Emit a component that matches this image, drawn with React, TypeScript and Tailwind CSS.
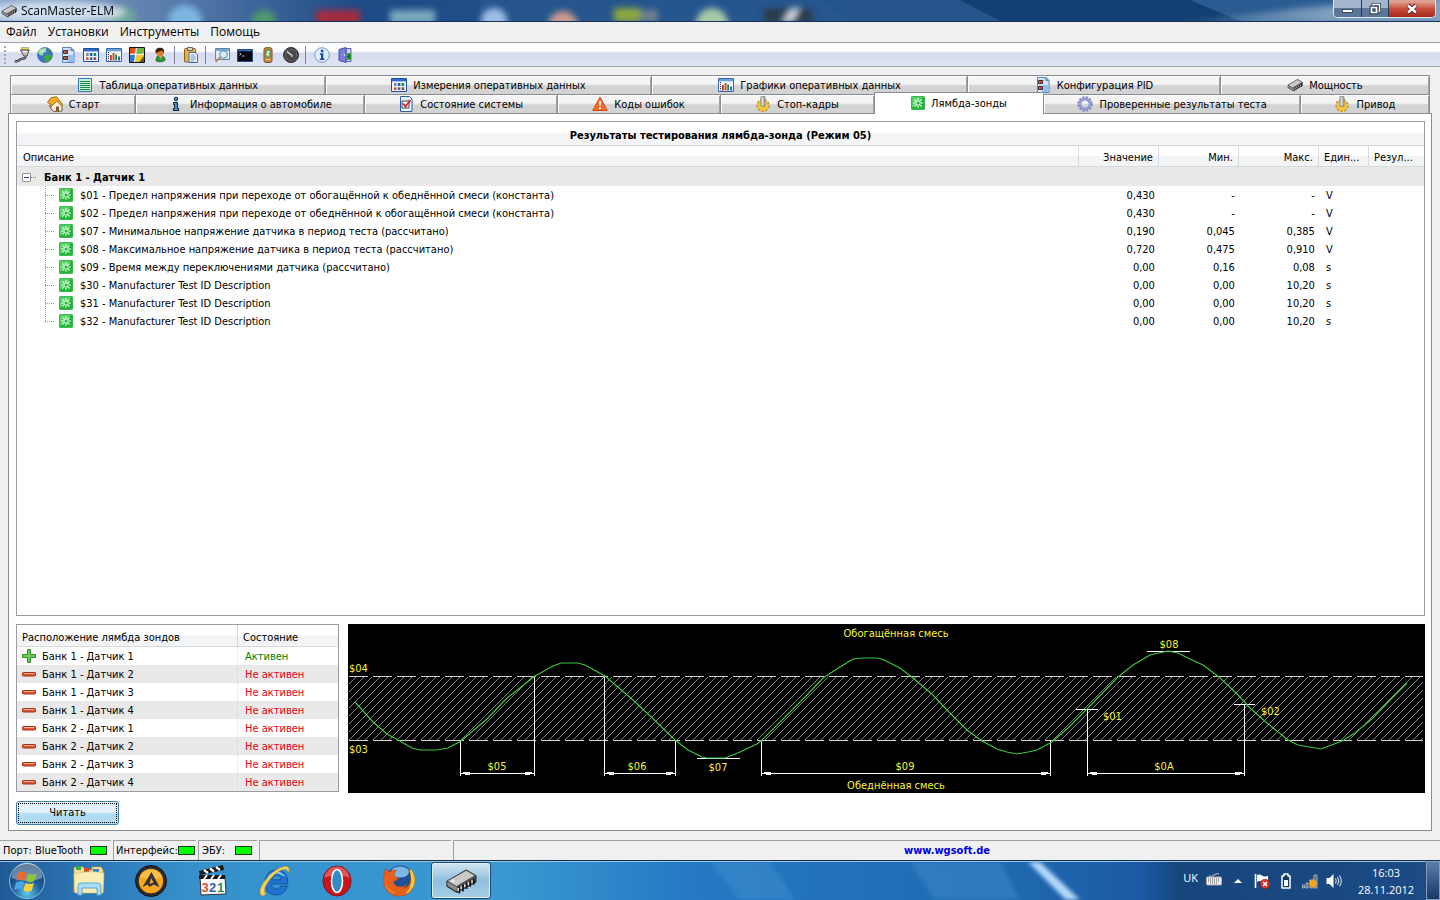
import React, { useState } from "react";

type IconProps = { size?: number };

function Svg({ size = 16, box = 16, children }: { size?: number; box?: number; children: React.ReactNode }) {
  return (
    <svg width={size} height={size} viewBox={`0 0 ${box} ${box}`} aria-hidden="true" className="shrink-0">
      {children}
    </svg>
  );
}

const ChipIcon = ({ size }: IconProps) => (
  <Svg size={size}>
    <path d="M1 8.2 10.6 2.6 15.4 5.4 15.4 8.4 6 13.6 1 10.6Z" fill="#555" stroke="#222" strokeWidth=".6" />
    <path d="M1 8 10.6 2.6 15.2 5.3 5.8 10.8Z" fill="#c9c9c9" stroke="#444" strokeWidth=".5" />
    <path d="M1.2 8.4 5.8 11v2.2L1.2 10.4Z" fill="#8b8b8b" />
    <path d="M7.2 10.8v3.4M9 9.8v3.4M10.8 8.8v3.2M12.6 7.7v3.2M14.4 6.7v3.2" stroke="#111" strokeWidth=".8" />
    <path d="M6.6 11.5v1.5M8.1 10.6v1.5M9.9 9.6v1.5M11.7 8.6v1.5M13.5 7.6v1.5" stroke="#eee" strokeWidth=".7" />
    <circle cx="3.9" cy="8.1" r=".7" fill="#eee" />
  </Svg>
);

const PlugIcon = () => (
  <Svg>
    <path d="M7.500 .5h7v2.500h-7z" fill="#efd95a" stroke="#777" strokeWidth=".5" />
    <path d="M6.500 3h8.700L13 9h-3.200Z" fill="#c4c4c4" stroke="#444" strokeWidth=".9" />
    <path d="M9 4.500h4" stroke="#fff" />
    <path d="M11.400 9C12 12.500 7.500 10.800 6 12.600 4.600 14.500 2.600 14.400 .8 14" fill="none" stroke="#222" strokeWidth="2.400" />
    <path d="M11.400 9C12 12.500 7.500 10.800 6 12.600 4.600 14.500 2.600 14.400 .8 14" fill="none" stroke="#ddd" strokeWidth=".7" />
  </Svg>
);

const GlobeIcon = () => (
  <Svg>
    <circle cx="8" cy="8" r="7.500" fill="#3f6fd0" stroke="#2b54a8" strokeWidth=".6" />
    <path d="M1.200 5C3 1.500 6.500 .4 9.500 1.200L8.600 4.400 6 5 6.600 8 4 8.600 2.200 7.600Z" fill="#8be08a" />
    <path d="M6.500 9.500 10 7.500 14 8 15 9.500C14 13 11.500 15 8.800 15.200L7 12.500Z" fill="#3aa83a" />
    <path d="M11 2.200 13.600 4.200 14.600 6.200 11.400 5.500Z" fill="#2f9440" />
    <ellipse cx="6" cy="4" rx="3.500" ry="2" fill="#fff" opacity=".35" />
  </Svg>
);

const PageIcon = () => (
  <Svg>
    <path d="M2.500 .5h8.500l3 3v12H2.500z" fill="#cfe4fa" stroke="#5f83b8" />
    <path d="M11 .5v3h3" fill="#6aa0e0" stroke="#5f83b8" />
    <path d="M9 8h4.500v7H7z" fill="#8fc0ef" />
    <path d="M3.500 3.500h4v3h-4zM3.500 9.500h4v3h-4z" fill="#c9735f" stroke="#333" />
    <path d="m5 4.500 1.200 1L8.500 2.800M5 10.500l1.200 1L8.500 8.800" fill="none" stroke="#a8281a" />
  </Svg>
);

const GridIcon = () => (
  <Svg>
    <path d="M.5 1.500h15v13H.5z" fill="#eef5fd" stroke="#1f4f9c" />
    <path d="M1 2h14v2.400H1z" fill="#2d6bc8" />
    <path d="M3 6h2.600v3H3z" fill="#8a8a8a" />
    <path d="M6.800 6h2.600v3H6.800z" fill="#235bd0" />
    <path d="M10.600 6h2.600v3h-2.600z" fill="#1c8f3d" />
    <path d="M3 10.300h2.600v2.700H3z" fill="#d4522e" />
    <path d="M6.800 10.300h2.600v2.700H6.800z" fill="#2a69be" />
    <path d="M10.600 10.300h2.600v2.700h-2.600z" fill="#8b4a30" />
  </Svg>
);

const BarsIcon = () => (
  <Svg>
    <path d="M.5 1.500h15v13H.5z" fill="#eef5fd" stroke="#3b68ab" />
    <path d="M1 2h14v2.200H1z" fill="#6a9fdf" />
    <path d="M2.500 5v8.500" stroke="#334" strokeDasharray="1 1" />
    <path d="M4 8h1.800v5.500H4z" fill="#c33" />
    <path d="M6.600 6h1.800v7.500H6.600z" fill="#bd4a20" />
    <path d="M9.200 7.500h1.800v6H9.200z" fill="#248a36" />
    <path d="M12 9.500h2v4h-2z" fill="#2f68c6" />
  </Svg>
);

const WindowsTile = () => (
  <Svg>
    <path d="M.5 .5h15v15H.5z" fill="#c7c7b2" stroke="#111" />
    <path d="M1 1h6l-1 6H1z" fill="#e04b21" />
    <path d="M8 1h7v5.500L7 7z" fill="#71b843" />
    <path d="M1 8h5.500l-1 7H1z" fill="#3478d2" />
    <path d="M7 8h8v7H6z" fill="#f2c62c" />
    <path d="M7.500 1 5.500 15M1 7.500c4-2 9 2 14-1" stroke="#fff" fill="none" />
    <path d="M10 15 15 9v6z" fill="#2a2a2a" opacity=".7" />
  </Svg>
);

const UserIcon = () => (
  <Svg>
    <path d="M4 13.500c0-4 1.800-5 4-5s5 1 5 4.500c0 2-9 2.500-9 .5Z" fill="#2c9c31" stroke="#14511a" strokeWidth=".7" />
    <circle cx="8" cy="5" r="4" fill="#e07a2a" />
    <path d="M3.500 6C3 2 5.500 .6 8.500 .8s4 2.700 3.500 5.200L10 3.500Z" fill="#35200f" />
    <path d="M6.800 8.700 8.500 12l2-3.300Z" fill="#e9a05c" />
  </Svg>
);

const ClipboardIcon = () => (
  <Svg>
    <rect x="1.500" y="1.500" width="11" height="13.500" rx="1" fill="#e7b53f" stroke="#80601c" />
    <path d="M4.500 .5h5v3h-5z" fill="#d7d7d7" stroke="#666" />
    <path d="M6 5.500h6l2.500 2.500v7.500H6z" fill="#f3f8ff" stroke="#49699e" />
    <path d="M7.500 8h4M7.500 10h5.500M7.500 12h5.500M7.500 14h4" stroke="#6792cf" />
  </Svg>
);

const SearchWindowIcon = () => (
  <Svg>
    <path d="M1.500 1.500h14v11h-14z" fill="#dcebf6" stroke="#5b85ae" />
    <path d="M2 2h13v2H2z" fill="#7ba8d0" />
    <circle cx="9.500" cy="7.500" r="3.800" fill="#d5ecfa" stroke="#69849b" />
    <path d="m6.500 10.200-5 4.600" stroke="#b2875d" strokeWidth="2" />
  </Svg>
);

const ConsoleIcon = () => (
  <Svg>
    <path d="M.5 2.500h15v12H.5z" fill="#05080d" stroke="#284b83" />
    <path d="M1 3h14v1.300H1z" fill="#356bb9" />
    <path d="m2.500 6 1.700 1.200-1.700 1.200M5 9h2.500" fill="none" stroke="#e5e5e5" strokeWidth=".8" />
  </Svg>
);

const DeviceIcon = () => (
  <Svg>
    <rect x="4" y=".7" width="8" height="14.800" rx="2" fill="#c68b49" stroke="#76511f" />
    <path d="M6 3h4v7H6z" fill="#a6e0ad" stroke="#557c56" />
    <path d="m6.500 8 3-4" stroke="#fff" />
    <path d="M6 12.500h4" stroke="#fce2a4" strokeDasharray="1 .5" />
  </Svg>
);

const GaugeIcon = () => (
  <Svg>
    <circle cx="8" cy="8" r="7.500" fill="#484848" stroke="#2c2c2c" />
    <circle cx="8" cy="8" r="5.800" fill="none" stroke="#8b8b8b" strokeDasharray="1 1.500" />
    <path d="M4 4.500 9.500 9" stroke="#f0f0f0" strokeWidth="1.100" />
    <circle cx="9" cy="8.800" r="1.200" fill="#aaa" />
  </Svg>
);

const InfoIcon = () => (
  <Svg>
    <circle cx="8" cy="8" r="7.300" fill="#e1eefc" stroke="#7599cc" />
    <path d="M6 6.300h3.300v5.200h1.200v1.500H5.800v-1.500H7v-3.700H6zM6.900 2.800h2.500v2.400H6.900z" fill="#174bb0" />
  </Svg>
);

const ExitIcon = () => (
  <Svg>
    <path d="M9 1.500h5v13H9z" fill="#cdd5f7" stroke="#5b63b8" />
    <path d="M2 2.500 9 .5v15l-7-2z" fill="#7a7fd6" stroke="#484eaa" />
    <path d="M10 6h4v7h-4z" fill="#3aa538" />
    <path d="m9.800 9.500 3-2.500v5z" fill="#0f6021" />
    <circle cx="7.500" cy="8" r=".8" fill="#fff" />
  </Svg>
);

const ListIcon = () => (
  <Svg>
    <path d="M1.500 1.500h13v13h-13z" fill="#c9efd6" stroke="#2d79b8" />
    <path d="M3 4.500h10M3 6.500h10M3 8.500h10M3 10.500h10M3 12.500h10" stroke="#16864a" strokeWidth="1.200" />
  </Svg>
);

const HomeIcon = () => (
  <Svg>
    <path d="M4 8.500 10 4l5 5v6L7 15.500 4 13z" fill="#f7f0dc" stroke="#4e3a1c" strokeWidth=".8" />
    <path d="M.5 6.500 4 1.500 9.500 .8 15.700 8.500l-1.500 1.200L10 5 5.500 9.500Z" fill="#eea927" stroke="#93590f" strokeWidth=".8" />
    <path d="M9 10.500h3v4.800H9z" fill="#7c5b3c" />
    <path d="m2 9 2.500 1v3L2 11z" fill="#b9773a" />
  </Svg>
);

const InfoGlyph = () => (
  <Svg>
    <circle cx="8" cy="3" r="1.800" fill="#4b93cf" stroke="#10212f" />
    <path d="M5.500 6.500h4v6h1.200v2H5.300v-2h1.200V8.500h-1z" fill="#4b93cf" stroke="#10212f" />
  </Svg>
);

const CheckPage = () => (
  <Svg>
    <path d="M2.500 .5h9l2.500 2.500v12.500H2.500z" fill="#eef4ff" stroke="#2d5ca8" />
    <path d="M4 5h7v7H4z" fill="#fff" stroke="#345" />
    <path d="m5.200 7.500 2.300 3L12.500 4" stroke="#d22020" strokeWidth="1.800" fill="none" />
  </Svg>
);

const WarnIcon = () => (
  <Svg>
    <path d="M8 1 15.300 14.500H.7Z" fill="#f06a2a" stroke="#d94c16" strokeLinejoin="round" />
    <path d="M7.100 5h1.900l-.4 5H7.500zM7.100 11.200H9V13H7.100z" fill="#fff" />
  </Svg>
);

const GearPin = () => (
  <Svg>
    <circle cx="8" cy="9.500" r="5.400" fill="#e8b923" stroke="#c6952a" strokeWidth="2.600" strokeDasharray="2.400 1.300" />
    <circle cx="8" cy="9.500" r="5.200" fill="#f0c837" />
    <path d="M6 .7h4v9.500H6z" fill="#b9b9bd" stroke="#77777c" strokeWidth=".8" />
    <path d="M7.200 1.200V9.800" stroke="#eee" />
  </Svg>
);

const LambdaIcon = () => (
  <Svg size={14}>
    <rect x=".5" y=".5" width="15" height="15" rx="1" fill="#1fb834" />
    <path d="M1 14V1h13Z" fill="#7be584" opacity=".6" />
    <path d="M8 2.500v4M8 9.500v4M2.500 8h4M9.500 8h4M4 4l2.700 2.700M9.300 9.300 12 12M12 4 9.300 6.700M6.700 9.300 4 12" stroke="#f2fff2" strokeWidth="1.300" />
    <rect x=".5" y=".5" width="15" height="15" rx="1" fill="none" stroke="#22a838" strokeWidth=".9" />
  </Svg>
);

const GearIcon = () => (
  <Svg>
    <circle cx="8" cy="8" r="6.500" fill="none" stroke="#7f86b8" strokeWidth="2.400" strokeDasharray="2.200 1.200" />
    <circle cx="8" cy="8" r="4.900" fill="none" stroke="#9299cc" strokeWidth="2.600" />
  </Svg>
);

const PlusIcon = () => (
  <Svg size={14} box={14}>
    <path d="M5.500 .5h3v5h5v3h-5v5h-3v-5h-5v-3h5z" fill="#6fcb5c" stroke="#2e8b2a" />
  </Svg>
);

const MinusIcon = () => (
  <Svg size={14} box={14}>
    <rect x=".5" y="5.500" width="13" height="3.500" rx=".8" fill="#e2532f" stroke="#a5301a" />
    <path d="M2 6.500h10" stroke="#f7b195" />
  </Svg>
);

type Tab = { name: string; icon: React.ReactNode; grow: string };

const upperTabs: Tab[] = [
  { name: "Таблица оперативных данных", icon: <ListIcon />, grow: "flex-[315]" },
  { name: "Измерения оперативных данных", icon: <GridIcon />, grow: "flex-[327]" },
  { name: "Графики оперативных данных", icon: <BarsIcon />, grow: "flex-[316]" },
  { name: "Конфигурация PID", icon: <PageIcon />, grow: "flex-[253]" },
  { name: "Мощность", icon: <ChipIcon />, grow: "flex-[209]" },
];

const lowerTabs: Tab[] = [
  { name: "Старт", icon: <HomeIcon />, grow: "flex-[125]" },
  { name: "Информация о автомобиле", icon: <InfoGlyph />, grow: "flex-[229]" },
  { name: "Состояние системы", icon: <CheckPage />, grow: "flex-[193]" },
  { name: "Коды ошибок", icon: <WarnIcon />, grow: "flex-[163]" },
  { name: "Стоп-кадры", icon: <GearPin />, grow: "flex-[154]" },
  { name: "Лямбда-зонды", icon: <LambdaIcon />, grow: "flex-[170]" },
  { name: "Проверенные результаты теста", icon: <GearIcon />, grow: "flex-[257]" },
  { name: "Привод", icon: <GearPin />, grow: "flex-[129]" },
];

const tests = [
  ["$01 - Предел напряжения при переходе от обогащённой к обеднённой смеси (константа)", "0,430", "-", "-", "V"],
  ["$02 - Предел напряжения при переходе от обеднённой к обогащённой смеси (константа)", "0,430", "-", "-", "V"],
  ["$07 - Минимальное напряжение датчика в период теста (рассчитано)", "0,190", "0,045", "0,385", "V"],
  ["$08 - Максимальное напряжение датчика в период теста (рассчитано)", "0,720", "0,475", "0,910", "V"],
  ["$09 - Время между переключениями датчика (рассчитано)", "0,00", "0,16", "0,08", "s"],
  ["$30 - Manufacturer Test ID Description", "0,00", "0,00", "10,20", "s"],
  ["$31 - Manufacturer Test ID Description", "0,00", "0,00", "10,20", "s"],
  ["$32 - Manufacturer Test ID Description", "0,00", "0,00", "10,20", "s"],
];

const sensors = [
  "Банк 1 - Датчик 1",
  "Банк 1 - Датчик 2",
  "Банк 1 - Датчик 3",
  "Банк 1 - Датчик 4",
  "Банк 2 - Датчик 1",
  "Банк 2 - Датчик 2",
  "Банк 2 - Датчик 3",
  "Банк 2 - Датчик 4",
];

const toolGroups: { label: string; icon: React.ReactNode }[][] = [
  [
    { label: "Подключить", icon: <PlugIcon /> },
    { label: "Сеть", icon: <GlobeIcon /> },
    { label: "Конфигурация", icon: <PageIcon /> },
    { label: "Измерения", icon: <GridIcon /> },
    { label: "Графики", icon: <BarsIcon /> },
    { label: "Окна", icon: <WindowsTile /> },
    { label: "Пользователь", icon: <UserIcon /> },
  ],
  [{ label: "Буфер", icon: <ClipboardIcon /> }],
  [
    { label: "Поиск", icon: <SearchWindowIcon /> },
    { label: "Терминал", icon: <ConsoleIcon /> },
    { label: "Адаптер", icon: <DeviceIcon /> },
    { label: "Приборы", icon: <GaugeIcon /> },
  ],
  [
    { label: "Справка", icon: <InfoIcon /> },
    { label: "Выход", icon: <ExitIcon /> },
  ],
];

function TitleBar() {
  return (
    <header className="relative flex h-[22px] items-center justify-between overflow-hidden border-b border-[#16305c] bg-linear-to-r from-[#8fa9cc] via-[#1d4b86] via-25% to-[#2d5f94]">
      <svg className="absolute inset-0 h-full w-full" viewBox="0 0 1440 21" preserveAspectRatio="none" aria-hidden="true">
        <defs>
          <filter id="soft" x="-30%" y="-100%" width="160%" height="300%">
            <feGaussianBlur stdDeviation="3" />
          </filter>
          <linearGradient id="edge" x1="0" x2="1">
            <stop offset="0" stopColor="#9fb8cf" stopOpacity="0" />
            <stop offset=".6" stopColor="#9fb8cf" />
          </linearGradient>
        </defs>
        <path d="M480 0H820L850 21H480z" fill="#28588f" opacity=".8" />
        <path d="M830 0h130l40 21H850z" fill="#26558c" />
        <path d="M960 0h230l50 21h-240z" fill="#143f72" />
        <g filter="url(#soft)">
          <circle cx="122" cy="20" r="14" fill="#6fa79a" />
          <ellipse cx="55" cy="12" rx="70" ry="11" fill="#dbe7f3" opacity=".85" />
          <circle cx="185" cy="22" r="17" fill="#7cb6e0" />
          <circle cx="264" cy="22" r="12" fill="#4f9a6c" />
          <path d="M316 10h44v14h-44z" fill="#a52a3d" />
          <path d="M390 10h45v14h-45z" fill="#7ba7bd" />
          <circle cx="494" cy="21" r="13" fill="#9dbce6" />
          <circle cx="563" cy="26" r="15" fill="#c99a8e" />
          <path d="M614 8h26v14h-26z" fill="#8fa83e" />
          <path d="M640 10h18v12h-18z" fill="#70818f" />
          <circle cx="712" cy="24" r="16" fill="#a9c9a8" />
          <path d="M764 9h46l4 14h-50z" fill="#2a3a4a" />
          <path d="m782 22 10-14h8l-8 14z" fill="#d5dbe0" />
          <path d="M1160 24 1230 17 1300 8 1450-4v28z" fill="url(#edge)" opacity=".75" />
        </g>
      </svg>
      <div className="relative flex items-center gap-[4px] pl-px">
        <ChipIcon />
        <h1 className="font-['Open_Sans','Noto_Sans',sans-serif] text-[12px] text-black">ScanMaster-ELM</h1>
      </div>
      <div className="relative mr-[4px] flex h-[18px] self-start overflow-hidden rounded-b-[5px] border border-t-0 border-[#dfe8f1] shadow-[inset_0_0_0_1px_#1d3350]">
        <button aria-label="Свернуть" className="flex w-[28px] items-end justify-center border-r border-[#23395a] bg-linear-to-b from-[#a3b5cc] from-45% to-[#5b7698] to-50% pb-[4px]">
          <span className="h-[4px] w-[11px] border border-[#3a4a60] bg-white" />
        </button>
        <button aria-label="Восстановить" className="flex w-[27px] items-center justify-center border-r border-[#23395a] bg-linear-to-b from-[#a3b5cc] from-45% to-[#5b7698] to-50%">
          <Svg size={12} box={12}>
            <path d="M4 1.500h6.500V8H4z" fill="none" stroke="#3a4a60" strokeWidth="3" />
            <path d="M4 1.500h6.500V8H4z" fill="none" stroke="#fff" strokeWidth="1.300" />
            <path d="M2 4h6v6H2z" fill="#5b7698" stroke="#3a4a60" strokeWidth="3" />
            <path d="M2.500 4.500h5v5h-5z" fill="#44546c" stroke="#fff" strokeWidth="1.700" />
          </Svg>
        </button>
        <button aria-label="Закрыть" className="flex w-[46px] items-center justify-center bg-linear-to-b from-[#dfa093] from-10% via-[#c8503b] via-50% to-[#a8281a]">
          <Svg size={12} box={12}>
            <path d="m2 2 8 8M10 2l-8 8" stroke="#5c2020" strokeWidth="4.200" />
            <path d="m2 2.500 8 7M10 2.500l-8 7" stroke="#fff" strokeWidth="2.400" />
          </Svg>
        </button>
      </div>
    </header>
  );
}

function TabButton({ tab, active, last, onSelect }: { tab: Tab; active: boolean; last: boolean; onSelect: () => void }) {
  return (
    <button
      role="tab"
      aria-selected={active}
      onClick={onSelect}
      className={`${tab.grow} flex min-w-0 items-center justify-center gap-[6px] whitespace-nowrap border-l border-t border-[#898c95] ${last ? "border-r" : ""} ${
        active
          ? "z-10 -mt-[2px] -mb-px bg-white pb-[2px]"
          : "bg-linear-to-b from-[#f4f4f4] from-45% to-[#d3d3d3] to-55% shadow-[inset_1px_1px_0_#fff,inset_-1px_0_0_#a0a2a8]"
      }`}
    >
      {tab.icon}
      <span className="pt-[2px]">{tab.name}</span>
    </button>
  );
}

const headBg = "bg-linear-to-b from-white from-45% to-[#f3f4f6] to-50%";

function ResultsTable() {
  return (
    <section className="min-h-0 flex-1 border border-[#9a9ca2] bg-white">
      <table className="w-full table-fixed border-separate border-spacing-0">
        <colgroup>
          <col />
          <col className="w-[80px]" />
          <col className="w-[80px]" />
          <col className="w-[80px]" />
          <col className="w-[50px]" />
          <col className="w-[55px]" />
        </colgroup>
        <thead>
          <tr className={`h-[24px] ${headBg}`}>
            <th colSpan={6} className="border-b border-[#d5d5d5] p-0 pt-[4px] text-center font-bold">
              Результаты тестирования лямбда-зонда (Режим 05)
            </th>
          </tr>
          <tr className={`h-[21px] ${headBg}`}>
            <th className="border-b border-r border-[#d9dadc] p-0 pl-[6px] pt-[4px] text-left font-normal">Описание</th>
            <th className="border-b border-r border-[#d9dadc] p-0 pr-[5px] pt-[4px] text-right font-normal">Значение</th>
            <th className="border-b border-r border-[#d9dadc] p-0 pr-[5px] pt-[4px] text-right font-normal">Мин.</th>
            <th className="border-b border-r border-[#d9dadc] p-0 pr-[5px] pt-[4px] text-right font-normal">Макс.</th>
            <th className="border-b border-r border-[#d9dadc] p-0 pl-[5px] pt-[4px] text-left font-normal">Един...</th>
            <th className="border-b border-[#d9dadc] p-0 pl-[5px] pt-[4px] text-left font-normal">Резул...</th>
          </tr>
        </thead>
        <tbody>
          <tr className="h-[19px] bg-[#e9e9e9]">
            <th colSpan={6} className="p-0 text-left font-bold">
              <div className="flex items-center pl-[5px] pt-[2px]">
                <button aria-label="Свернуть группу" className="flex size-[9px] items-center justify-center rounded-[1px] border border-[#919191] bg-white">
                  <span className="h-px w-[5px] bg-[#2b3f8f]" />
                </button>
                <span className="mr-[8px] w-[5px] border-t border-dotted border-[#808080]" />
                Банк 1 - Датчик 1
              </div>
            </th>
          </tr>
          {tests.map((t, i) => (
            <tr key={t[0]} className="h-[18px]">
              <td className="p-0">
                <div className="flex h-[18px] items-center pl-[28px]">
                  <svg width="14" height="18" className="shrink-0" aria-hidden="true" shapeRendering="crispEdges">
                    <path d={i === tests.length - 1 ? "M.5 0V9" : "M.5 0V18"} stroke="#9a9a9a" strokeDasharray="1 1" />
                    <path d="M0 9.500H9" stroke="#9a9a9a" strokeDasharray="1 1" />
                  </svg>
                  <LambdaIcon />
                  <span className="truncate pl-[7px] pt-px">{t[0]}</span>
                </div>
              </td>
              <td className="p-0 pr-[4px] pt-px text-right">{t[1]}</td>
              <td className="p-0 pr-[4px] pt-px text-right">{t[2]}</td>
              <td className="p-0 pr-[4px] pt-px text-right">{t[3]}</td>
              <td className="p-0 pl-[7px] pt-px">{t[4]}</td>
              <td className="p-0" />
            </tr>
          ))}
        </tbody>
      </table>
    </section>
  );
}

function SensorTable() {
  return (
    <div className="w-[323px] shrink-0 self-start border border-[#9a9ca2] bg-white">
      <table className="w-full table-fixed border-separate border-spacing-0">
        <colgroup>
          <col className="w-[221px]" />
          <col />
        </colgroup>
        <thead>
          <tr className={`h-[22px] ${headBg}`}>
            <th className="border-b border-r border-[#d9dadc] p-0 pl-[5px] pt-[4px] text-left font-normal">Расположение лямбда зондов</th>
            <th className="border-b border-[#d9dadc] p-0 pl-[5px] pt-[4px] text-left font-normal">Состояние</th>
          </tr>
        </thead>
        <tbody>
          {sensors.map((s, i) => (
            <tr key={s} className="h-[18px] odd:bg-white even:bg-[#e9e9e9]">
              <td className="border-r border-dotted border-[#dcdcdc] p-0">
                <div className="flex items-center gap-[6px] pl-[5px]">
                  {i === 0 ? <PlusIcon /> : <MinusIcon />}
                  <span className="pt-px">{s}</span>
                </div>
              </td>
              <td className={`p-0 pl-[7px] pt-px ${i === 0 ? "text-[#008000]" : "text-[#e00018]"}`}>{i === 0 ? "Активен" : "Не активен"}</td>
            </tr>
          ))}
        </tbody>
      </table>
    </div>
  );
}

const curve =
  "7,78 25,98 39,110 50,116 64,124 72,126 89,126 100,124 113,117 139,95 159,74 187,52 205,42 213,39 230,39 237,41 257,52 285,76 299,89 327,116 340,126 354,133 359,134 377,134 392,128 409,120 414,116 435,95 459,71 475,54 492,43 505,35 514,34 530,34 536,36 552,44 565,54 585,71 599,86 619,106 634,117 649,125 659,128 669,130 680,128 689,126 704,118 720,104 739,85 770,53 785,41 802,31 820,27 830,29 842,35 855,41 871,53 890,71 902,84 919,99 940,116 950,121 973,125 994,117 1007,109 1025,94 1042,76 1059,59";

const marks: [string, number, number, "start" | "middle"][] = [
  ["$04", 1, 48, "start"],
  ["$03", 1, 129, "start"],
  ["$05", 149, 146, "middle"],
  ["$06", 289, 146, "middle"],
  ["$07", 370, 147, "middle"],
  ["$09", 557, 146, "middle"],
  ["$0A", 816, 146, "middle"],
  ["$01", 755, 96, "start"],
  ["$02", 913, 91, "start"],
  ["$08", 821, 24, "middle"],
  ["Обогащённая смесь", 548, 13, "middle"],
  ["Обеднённая смесь", 548, 165, "middle"],
];

const spans: [number, number, number, number][] = [
  [112, 186, 117, 52],
  [256, 327, 52, 116],
  [413, 702, 116, 117],
  [739, 896, 85, 80],
];

function WaveChart() {
  return (
    <div className="min-w-0 flex-1 bg-black">
      <svg viewBox="0 0 1077 169" className="block w-full" role="img" aria-label="Диаграмма сигнала лямбда-зонда">
        <defs>
          <pattern id="hatch" width="8" height="8" patternUnits="userSpaceOnUse" patternTransform="translate(5 0)">
            <path d="M-1 1 1-1M0 8 8 0M7 9 9 7" stroke="#a8a8a8" strokeWidth=".8" />
          </pattern>
        </defs>
        <path d="M1 53h1074v63H1z" fill="url(#hatch)" />
        <g stroke="#d0d0d0" shapeRendering="crispEdges" strokeDasharray="19 5">
          <path d="M1 52.500H1075" />
          <path d="M1 116.500H1075" />
        </g>
        <g stroke="#fff" shapeRendering="crispEdges">
          {spans.map(([a, b, ya, yb]) => (
            <g key={a}>
              <path d={`M${a}.5 ${ya}V152M${b}.5 ${yb}V152M${a} 149.5H${b}`} />
              <path d={`M${a + 3} 148.5h7M${a + 5} 150.500h5M${b - 9} 148.500h7M${b - 9} 150.500h5`} />
            </g>
          ))}
          <path d="M349 134.500h43M799 27.500h43M728 85.500h22M886 80.500h21" />
        </g>
        <polyline points={curve} fill="none" stroke="#3fc43f" strokeWidth="1.200" />
        {marks.map(([t, x, y, anchor]) => (
          <text key={t} x={x} y={y} textAnchor={anchor} fill="#f4f43c">
            {t}
          </text>
        ))}
      </svg>
    </div>
  );
}

const Led = () => <span className="h-[9px] w-[17px] shrink-0 border border-[#1a3a1a] bg-[#00ff00]" />;

function StatusBar() {
  return (
    <footer className="flex h-[20px] gap-[2px] whitespace-nowrap">
      <div className="flex w-[111px] items-center justify-between border-t border-[#a0a0a0] pl-[3px] pr-[4px]">
        Порт: BlueTooth <Led />
      </div>
      <div className="flex w-[83px] items-center justify-between border-l border-t border-[#a0a0a0] pl-[2px] pr-[4px]">
        Интерфейс: <Led />
      </div>
      <div className="flex w-[59px] items-center justify-between border-l border-t border-[#a0a0a0] pl-[3px] pr-[5px]">
        ЭБУ: <Led />
      </div>
      <div className="w-[192px] border-l border-t border-[#a0a0a0]" />
      <div className="flex flex-1 items-center justify-center border-l border-t border-[#a0a0a0]">
        <a href="http://www.wgsoft.de" className="font-bold text-[#0000e0]">
          www.wgsoft.de
        </a>
      </div>
    </footer>
  );
}

const StartOrb = () => (
  <Svg size={38} box={38}>
    <defs>
      <radialGradient id="orb" cx=".5" cy=".85" r=".8">
        <stop offset="0" stopColor="#5fc7ee" />
        <stop offset=".5" stopColor="#1d5f9e" />
        <stop offset="1" stopColor="#123a66" />
      </radialGradient>
    </defs>
    <circle cx="19" cy="19" r="17.500" fill="url(#orb)" stroke="#8fc0dc" />
    <path d="M3.500 16A15.500 15.500 0 0 1 34.500 16Q19 22 3.500 16Z" fill="#fff" opacity=".35" />
    <path d="M10.500 11q4-2.500 8.300 0l-2.100 7.500q-4-2.200-8.300 .3Z" fill="#f0672c" />
    <path d="M20 11.800q4 2.200 8.500-.2l-2.100 7.500q-4 2.200-8.500 0Z" fill="#8cc63e" />
    <path d="M8 20.500q4-2.400 8.300 0l-2.100 7.500q-4-2.400-8.300 .2Z" fill="#4aa5ea" />
    <path d="M17.400 21q4 2.200 8.500 0l-2.100 7.500q-4 2.400-8.500 0Z" fill="#fbd13a" />
  </Svg>
);

const FolderIcon = () => (
  <Svg size={34} box={34}>
    <path d="M2 5q0-2 2-2h7l2 3h7V3h9l2 3v22H2z" fill="#f3df92" stroke="#c9a94a" strokeWidth=".7" />
    <path d="M4 2h5v4H4z" fill="#3faa47" />
    <path d="M12 4h5v4h-5z" fill="#d84a30" />
    <path d="M21 5h6v4h-6z" fill="#3c7ed0" />
    <path d="M2 10q15-4 30-1l-1 20H3z" fill="#fbeeb4" stroke="#d9bf6a" strokeWidth=".6" />
    <path d="M6 31v-9q0-3 3-3h17q3 0 3 3v9h-4v-7H10v7z" fill="#a9dcf5" stroke="#5ca8d6" />
  </Svg>
);

const AimpIcon = () => (
  <Svg size={34} box={34}>
    <circle cx="17" cy="17" r="15.500" fill="#2c2c30" stroke="#111" />
    <circle cx="17" cy="17" r="12.200" fill="#f7a81f" />
    <path d="M6 13a12 12 0 0 1 22 0q-11 4-22 0Z" fill="#ffc95b" opacity=".7" />
    <path d="m17.500 8 8 15-6-2.500-4 2.500-2-2.500-5 2.500Z" fill="#343438" />
    <path d="m17 14 2.500 4.500-4 1.500Z" fill="#f7a81f" />
  </Svg>
);

const ClapperIcon = () => (
  <Svg size={34} box={34}>
    <path d="M4 12h25l1 18-25 1z" fill="#fafafa" stroke="#333" />
    <path d="M3 7 27 1l1 5L4 11z" fill="#181818" />
    <path d="m8 6 4 3M14 4.500l4 3M20 3l4 3" stroke="#fff" strokeWidth="2.200" />
    <path d="M3 11h26v4H3z" fill="#181818" />
    <path d="m8 15 3-4M15 15l3-4M22 15l3-4" stroke="#fff" strokeWidth="2" />
    <g fontFamily="Liberation Sans, sans-serif" fontWeight="700" fontSize="13">
      <text x="5.500" y="28" fill="#d8502b">3</text>
      <text x="13" y="28" fill="#2d62b8">2</text>
      <text x="21" y="28" fill="#2e9243">1</text>
    </g>
  </Svg>
);

const ExplorerIcon = () => (
  <Svg size={34} box={34}>
    <path d="M30 20H13.500Q14 25 18.500 25q3 0 4.500-3h6.500Q27 31 18.500 31 7 31 7 18.500 7.500 6 18.500 6 30 6 30 20ZM13.700 15.800h9.600q-.8-4.300-4.700-4.300t-4.900 4.300Z" fill="#1f74cf" stroke="#0f4f9a" strokeWidth=".8" fillRule="evenodd" />
    <path d="M9 14Q12 8 18.500 7.500 25 8 27.500 13 22 9.500 18.500 9.500 13 10 9 14Z" fill="#8ccbf7" />
    <path d="M3.500 31.500Q-1 27 8 15.500 17.500 4 26.500 2.500 32.500 1.500 30.500 8.500 29 4 24.500 5.500 16.500 8.500 10 18 4 27 8 30 5.500 32.500 3.500 31.500Z" fill="#f7d352" stroke="#c89820" strokeWidth=".5" />
  </Svg>
);

const OperaIcon = () => (
  <Svg size={34} box={34}>
    <ellipse cx="17" cy="17" rx="14" ry="15" fill="#c9151e" stroke="#8a0c12" />
    <path d="M4 14Q7 2.500 17 2.500T30 14Q17 8 4 14Z" fill="#f08a8a" opacity=".55" />
    <ellipse cx="17" cy="17" rx="5.500" ry="11.500" fill="#2f8cc6" stroke="#fff" strokeWidth="1.600" />
  </Svg>
);

const FirefoxIcon = () => (
  <Svg size={34} box={34}>
    <circle cx="18" cy="15" r="13.500" fill="#1f4f96" />
    <ellipse cx="18" cy="8" rx="9" ry="5.500" fill="#7db7e8" />
    <path d="M29 5.500q5.500 7 3 15.500Q28.500 32 17 32.300 5.500 32 2 21 .5 13 3.500 4l3.500 4q3-2.500 7.500-2L12 10.500q0 2.500 3.500 2.700 1.800.8-.5 2.600l-3.500 2q1 5 6.500 5 4.500 0 6.500-2.500-1 2.500-3 4 7-1.500 7.500-9.800 0-5-1.500-9Z" fill="#e5601a" stroke="#b8430f" strokeWidth=".5" />
    <path d="M29 5.500q5.500 7 3 15.500-2.500 7-9 9 6.500-6 6-15 0-5-1.500-9Z" fill="#fbc932" />
    <path d="M3 14q0 12 12 15.500Q6 29.500 3.500 20 2.500 17 3 14Z" fill="#f59a3a" />
  </Svg>
);

const pinned = [
  { label: "Проводник", icon: <FolderIcon /> },
  { label: "AIMP", icon: <AimpIcon /> },
  { label: "Media Player Classic", icon: <ClapperIcon /> },
  { label: "Internet Explorer", icon: <ExplorerIcon /> },
  { label: "Opera", icon: <OperaIcon /> },
  { label: "Firefox", icon: <FirefoxIcon /> },
];

function Taskbar() {
  return (
    <nav
      aria-label="Панель задач"
      className="relative flex h-[40px] items-stretch border-t border-[#12304f] bg-[#2b7cbe] font-['Open_Sans','Noto_Sans',sans-serif] text-[11px] text-white"
    >
      <svg className="absolute inset-0 h-full w-full" viewBox="0 0 1440 39" preserveAspectRatio="none" aria-hidden="true">
        <defs>
          <filter id="glow" x="-30%" y="-30%" width="160%" height="160%">
            <feGaussianBlur stdDeviation="2" />
          </filter>
          <linearGradient id="sky" x1="0" x2="1">
            <stop offset="0" stopColor="#205a96" />
            <stop offset=".05" stopColor="#2b72b2" />
            <stop offset=".13" stopColor="#3590cb" />
            <stop offset=".35" stopColor="#3a98d2" />
            <stop offset=".48" stopColor="#2479c2" />
            <stop offset=".7" stopColor="#1f69b0" />
            <stop offset=".79" stopColor="#1b5ba6" />
            <stop offset=".82" stopColor="#17457c" />
            <stop offset="1" stopColor="#1c4b86" />
          </linearGradient>
        </defs>
        <path d="M0 0h1440v39H0z" fill="url(#sky)" />
        <path d="M710 1h60l25 38h-55z" fill="#4a97d4" opacity=".4" filter="url(#glow)" />
        <path d="M910 1h90l20 38h-85z" fill="#4a90d0" opacity=".4" filter="url(#glow)" />
        <path d="M1028 1h12l40 38h-14z" fill="#b5d9fa" filter="url(#glow)" />
        <path d="M0 0h1440v1H0z" fill="#9cc3e0" />
      </svg>
      <button aria-label="Пуск" className="relative flex w-[58px] items-center pl-[8px]">
        <StartOrb />
      </button>
      {pinned.map((p) => (
        <button key={p.label} aria-label={p.label} className="relative flex w-[62px] items-center justify-center">
          {p.icon}
        </button>
      ))}
      <button
        aria-label="ScanMaster-ELM"
        className="relative my-px ml-[1px] flex w-[60px] items-center justify-center rounded-[3px] border border-[#1f4a70] bg-linear-to-b from-[#d3e6f2] via-[#8fbfdd] to-[#a5cfe6] shadow-[inset_0_0_0_1px_#e0f0fa]"
      >
        <ChipIcon size={32} />
      </button>
      <div className="relative ml-auto flex items-center">
        <span className="pb-[5px]">UK</span>
        <div className="flex items-center gap-[8px] pl-[8px]">
          <Svg>
            <path d="M3 3q3 1 5-1t5-1" stroke="#ccc" fill="none" />
            <rect x=".5" y="4" width="15" height="8" rx="1" fill="#f0f0f0" stroke="#aaa" />
            <path d="M2 6h12M2 8h12M4 10h8" stroke="#555" strokeDasharray="1 1" />
          </Svg>
          <Svg>
            <path d="m4 10 4-4 4 4z" fill="#fff" />
          </Svg>
          <Svg>
            <path d="M1.500 1v14" stroke="#fff" strokeWidth="1.600" />
            <path d="M3 2q3-1 5 .5t6 .5v6q-3 .5-6-.5T3 9z" fill="#fff" />
            <circle cx="11" cy="11" r="4.800" fill="#d8342a" stroke="#8e1f18" strokeWidth=".6" />
            <path d="m9 9 4 4M13 9l-4 4" stroke="#fff" strokeWidth="1.500" />
          </Svg>
          <Svg>
            <path d="M6 1h4v2h2v12H4V3h2z" fill="#16385f" stroke="#fff" strokeWidth="1.500" strokeLinejoin="round" />
            <path d="M6 7h4v6H6z" fill="#fff" />
          </Svg>
          <Svg>
            <path d="M.5 12h2v3h-2zM4 10h2v5H4zM8 7h2v8H8zM12 2h3v13h-3z" fill="#5b6b7a" stroke="#c5ced6" strokeWidth=".7" />
            <circle cx="11" cy="10.500" r="3.200" fill="#ffb92e" />
            <path d="M11 5.500v10M6 10.500h10M7.500 7l7 7M14.500 7l-7 7" stroke="#f5a21a" strokeWidth="1.100" />
          </Svg>
          <Svg>
            <path d="M.5 5h3l4-4v14l-4-4h-3z" fill="#fff" />
            <path d="M9.500 5.500q1.500 2.500 0 5M11.500 4q2.500 4 0 8M13.500 2.500q3.500 5.500 0 11" stroke="#e5eef5" fill="none" />
          </Svg>
        </div>
        <div className="flex w-[78px] flex-col items-center pl-[10px] leading-[17px]">
          <time>16:03</time>
          <span>28.11.2012</span>
        </div>
        <button aria-label="Показать рабочий стол" className="ml-[6px] h-full w-[14px] border border-[#7f9dbd] bg-linear-to-b from-[#5d7ea6] to-[#17396b]" />
      </div>
    </nav>
  );
}

export default function App() {
  const [active, setActive] = useState("Лямбда-зонды");
  return (
    <div className="flex min-h-screen flex-col bg-[#f0f0f0] font-['DejaVu_Sans_Condensed','Noto_Sans',sans-serif] text-[11px] leading-[14px] text-black">
      <TitleBar />
      <nav aria-label="Меню" className="flex h-[20px] items-center gap-[11px] pl-[6px] font-['Open_Sans','Noto_Sans',sans-serif] text-[12px]">
        <button>Файл</button>
        <button>Установки</button>
        <button>Инструменты</button>
        <button>Помощь</button>
      </nav>
      <div role="toolbar" aria-label="Инструменты" className="flex h-[25px] items-center border-y border-[#a0a2a8] bg-linear-to-b from-[#fbfcfe] from-35% via-[#d5dcee] via-45% to-[#dfe4f6]">
        <span className="ml-[4px] h-[18px] w-[6px] border-l-2 border-dotted border-[#a5a9b5]" />
        {toolGroups.map((group, g) => (
          <div key={g} className="flex items-center">
            {g > 0 && <span className="ml-[3px] mr-[4px] h-[18px] w-px bg-[#80838c]" />}
            {group.map((t) => (
              <button key={t.label} aria-label={t.label} className="flex w-[23px] justify-center">
                {t.icon}
              </button>
            ))}
          </div>
        ))}
      </div>
      <main className="flex flex-1 flex-col px-[8px] pb-[9px] pt-[8px]">
        <div role="tablist" className="flex flex-col px-[2px]">
          <div className="flex h-[19px]">
            {upperTabs.map((t, i) => (
              <TabButton key={t.name} tab={t} active={t.name === active} last={i === upperTabs.length - 1} onSelect={() => setActive(t.name)} />
            ))}
          </div>
          <div className="flex h-[19px]">
            {lowerTabs.map((t, i) => (
              <TabButton key={t.name} tab={t} active={t.name === active} last={i === lowerTabs.length - 1} onSelect={() => setActive(t.name)} />
            ))}
          </div>
        </div>
        <div role="tabpanel" className="flex flex-1 flex-col gap-[8px] border border-[#898c95] bg-white pb-[5px] pl-[7px] pr-[6px] pt-[7px]">
          <ResultsTable />
          <div className="flex gap-[9px]">
            <SensorTable />
            <WaveChart />
          </div>
          <button className="h-[24px] w-[103px] self-start rounded-[3px] border border-[#3c7fb1] bg-linear-to-b from-[#e5f4fc] from-45% to-[#b0dcf4] to-55% p-px">
            <span className="flex h-full items-center justify-center border border-dotted border-black">Читать</span>
          </button>
        </div>
      </main>
      <StatusBar />
      <Taskbar />
    </div>
  );
}
